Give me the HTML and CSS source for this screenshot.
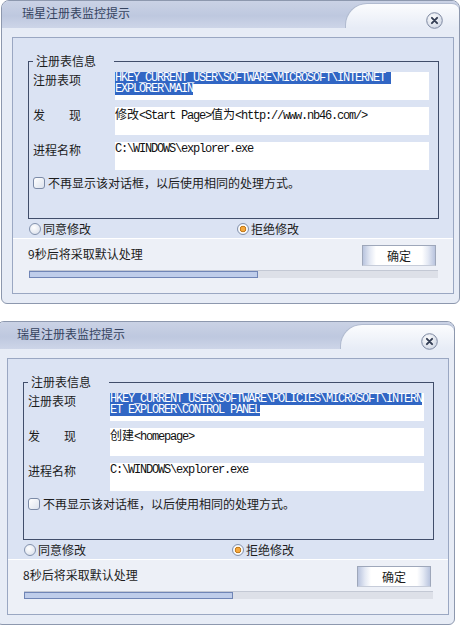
FILE: index.html
```html
<!DOCTYPE html>
<html lang="zh-CN">
<head>
    <meta charset="UTF-8">
    <meta name="viewport" content="width=device-width, initial-scale=1.0">
    <title>瑞星注册表监控提示</title>
    <link rel="stylesheet" href="styles.css">
</head>
<body>
    <!-- Premier avertissement -->
    <div class="dialog first">
        <div class="titlebar">
            <div class="title">瑞星注册表监控提示</div>
            <div class="title-tab">
                <span class="close-btn">
                    <svg width="17" height="17" viewBox="0 0 17 17">
                        <circle cx="8.5" cy="8.5" r="7.8" fill="url(#closeGrad)" stroke="#7f8aa2" stroke-width="1"/>
                        <path d="M5.9 5.9 L11.1 11.1 M11.1 5.9 L5.9 11.1" stroke="#353f55" stroke-width="2" stroke-linecap="round"/>
                        <defs>
                            <radialGradient id="closeGrad" cx="40%" cy="35%" r="70%">
                                <stop offset="0" stop-color="#ffffff"/>
                                <stop offset="1" stop-color="#cfd6e4"/>
                            </radialGradient>
                        </defs>
                    </svg>
                </span>
            </div>
        </div>
        <div class="panel">
            <div class="panel-top">
                <fieldset class="group">
                    <legend>注册表信息</legend>
                    <div class="rows">
                        <div class="row">
                            <div class="label">注册表项</div>
                            <div class="field">
                                <div class="sel">HKEY_CURRENT_USER\SOFTWARE\MICROSOFT\INTERNET </div>
                                <div class="sel">EXPLORER\MAIN</div>
                            </div>
                        </div>
                        <div class="row">
                            <div class="label spread"><span>发</span><span>现</span></div>
                            <div class="field"><span class="cjk">修改</span>&lt;Start Page&gt;<span class="cjk">值为</span>&lt;http://www.nb46.com/&gt;</div>
                        </div>
                        <div class="row">
                            <div class="label">进程名称</div>
                            <div class="field">C:\WINDOWS\explorer.exe</div>
                        </div>
                    </div>
                    <div class="check"><span class="checkbox"></span>不再显示该对话框，以后使用相同的处理方式。</div>
                </fieldset>
                <div class="choices">
                    <span class="choice"><span class="radio"></span>同意修改</span>
                    <span class="choice"><span class="radio on"></span>拒绝修改</span>
                </div>
            </div>
            <div class="panel-bottom">
                <div class="status-row">
                    <span class="countdown">9秒后将采取默认处理</span>
                    <button class="ok-btn">确定</button>
                </div>
                <div class="progress"><div class="progress-fill" style="width: 56%"></div></div>
            </div>
        </div>
    </div>

    <!-- Deuxième avertissement -->
    <div class="dialog second">
        <div class="titlebar">
            <div class="title">瑞星注册表监控提示</div>
            <div class="title-tab">
                <span class="close-btn">
                    <svg width="17" height="17" viewBox="0 0 17 17">
                        <circle cx="8.5" cy="8.5" r="7.8" fill="url(#closeGrad2)" stroke="#7f8aa2" stroke-width="1"/>
                        <path d="M5.9 5.9 L11.1 11.1 M11.1 5.9 L5.9 11.1" stroke="#353f55" stroke-width="2" stroke-linecap="round"/>
                        <defs>
                            <radialGradient id="closeGrad2" cx="40%" cy="35%" r="70%">
                                <stop offset="0" stop-color="#ffffff"/>
                                <stop offset="1" stop-color="#cfd6e4"/>
                            </radialGradient>
                        </defs>
                    </svg>
                </span>
            </div>
        </div>
        <div class="panel">
            <div class="panel-top">
                <fieldset class="group">
                    <legend>注册表信息</legend>
                    <div class="rows">
                        <div class="row">
                            <div class="label">注册表项</div>
                            <div class="field">
                                <div class="sel">HKEY_CURRENT_USER\SOFTWARE\POLICIES\MICROSOFT\INTERN</div>
                                <div class="sel">ET EXPLORER\CONTROL PANEL</div>
                            </div>
                        </div>
                        <div class="row">
                            <div class="label spread"><span>发</span><span>现</span></div>
                            <div class="field"><span class="cjk">创建</span>&lt;homepage&gt;</div>
                        </div>
                        <div class="row">
                            <div class="label">进程名称</div>
                            <div class="field">C:\WINDOWS\explorer.exe</div>
                        </div>
                    </div>
                    <div class="check"><span class="checkbox"></span>不再显示该对话框，以后使用相同的处理方式。</div>
                </fieldset>
                <div class="choices">
                    <span class="choice"><span class="radio"></span>同意修改</span>
                    <span class="choice"><span class="radio on"></span>拒绝修改</span>
                </div>
            </div>
            <div class="panel-bottom">
                <div class="status-row">
                    <span class="countdown">8秒后将采取默认处理</span>
                    <button class="ok-btn">确定</button>
                </div>
                <div class="progress"><div class="progress-fill" style="width: 51%"></div></div>
            </div>
        </div>
    </div>
</body>
</html>
```

FILE: styles.css
```css
* {
    box-sizing: border-box;
}
body {
    margin: 0;
    background: #fff;
    font-family: "Noto Sans CJK SC", "DejaVu Sans", sans-serif;
    font-size: 12px;
    color: #1c1c1c;
    overflow: hidden;
}
.dialog {
    width: 459px;
    background: #e7ecf6;
    border: 1px solid #8d98ae;
    border-radius: 8px 8px 6px 6px;
    padding-bottom: 9px;
}
.dialog.first {
    margin-left: 1px;
}
.dialog.second {
    margin: 17px 0 0 -4px;
}
.titlebar {
    display: flex;
    height: 27px;
    background: linear-gradient(#cad2e5, #bec8df 55%, #cdd5e8);
    border-radius: 7px 7px 0 0;
}
.title {
    flex: 1;
    padding-left: 20px;
    line-height: 24px;
    color: #35435f;
}
.title-tab {
    width: 114px;
    margin-top: 2px;
    background: linear-gradient(#fbfcfe, #e7ecf6);
    border-top: 1px solid #b1bbd0;
    border-left: 1px solid #b1bbd0;
    border-radius: 22px 7px 0 0;
    display: flex;
    justify-content: flex-end;
    align-items: flex-start;
    padding: 8px 16px 0 0;
}
.close-btn {
    display: block;
    width: 17px;
    height: 17px;
}
.close-btn svg {
    display: block;
}
.panel {
    margin: 9px 5px 0 10px;
    border: 1px solid #9aa7c2;
}
.panel-top {
    background: #dbe3f3;
    padding: 16px 14px 2px 15px;
}
.group {
    margin: 0;
    min-width: 0;
    padding: 4px 9px 28px 4px;
    border: 1px solid #414e6a;
}
.group legend {
    padding: 0 18px 0 3px;
    line-height: 14px;
}
.rows {
    display: flex;
    flex-direction: column;
    gap: 7px;
}
.row {
    display: flex;
    height: 28px;
}
.label {
    width: 82px;
    line-height: 14px;
    padding-top: 1px;
}
.label.spread {
    display: flex;
    justify-content: space-between;
    width: 48px;
    margin-right: 34px;
}
.field {
    flex: 1;
    background: #fff;
    font-family: "Liberation Mono", "Noto Sans CJK SC", monospace;
    font-size: 12px;
    letter-spacing: -1.2px;
    line-height: 12px;
    padding-top: 1px;
    white-space: nowrap;
    color: #111;
}
.field .cjk {
    font-family: "Noto Sans CJK SC", sans-serif;
    letter-spacing: 0;
}
/* texte sélectionné, une ligne par bloc */
.sel {
    width: fit-content;
    height: 11px;
    line-height: 11px;
    white-space: pre;
    background: #3166c4;
    color: #fff;
}
.sel:first-child {
    margin-top: -1px;
    padding-top: 1px;
    height: 12px;
}
.check {
    display: flex;
    align-items: center;
    gap: 3px;
    margin-top: 6px;
    line-height: 14px;
}
.checkbox {
    width: 12px;
    height: 12px;
    border: 1px solid #7c8ba7;
    border-radius: 3px;
    background: linear-gradient(135deg, #fff, #dce2ed);
}
.choices {
    display: grid;
    grid-template-columns: 208px auto;
    margin: 3px 0 0 1px;
    line-height: 14px;
}
.choice {
    display: flex;
    align-items: center;
    gap: 2px;
}
.radio {
    width: 12px;
    height: 12px;
    border-radius: 50%;
    border: 1px solid #8392ad;
    background: radial-gradient(circle at 40% 35%, #fff, #d5dbe8);
}
.radio.on {
    background: radial-gradient(circle, #f5a83e 0 2px, #c27c1e 2.6px 3px, #fff 3.6px, #d5dbe8 100%);
}
/* Zone du bas : compte à rebours + bouton */
.panel-bottom {
    background: #edf0f7;
    border-top: 1px solid #fff;
    padding: 6px 15px 15px;
}
.status-row {
    display: flex;
    justify-content: space-between;
    align-items: center;
    height: 21px;
}
.countdown {
    line-height: 14px;
    margin-top: -4px;
}
.ok-btn {
    width: 74px;
    height: 21px;
    margin-right: 2px;
    padding: 0;
    font-family: inherit;
    font-size: 12px;
    color: #1c1c1c;
    border: 1px solid #9ea7ba;
    border-bottom-color: #c6ccd9;
    background: linear-gradient(90deg, #b9c4de 0, #e4e9f4 7px, #fff 13px, #fff calc(100% - 13px), #e4e9f4 calc(100% - 7px), #b9c4de 100%);
}
.progress {
    margin: 4px 0 0 1px;
    height: 8px;
    background: #dde0e8;
    border-top: 1px solid #c3c8d4;
}
.progress-fill {
    height: 100%;
    background: #bfcdea;
    border: 1px solid #7085b6;
}
```
